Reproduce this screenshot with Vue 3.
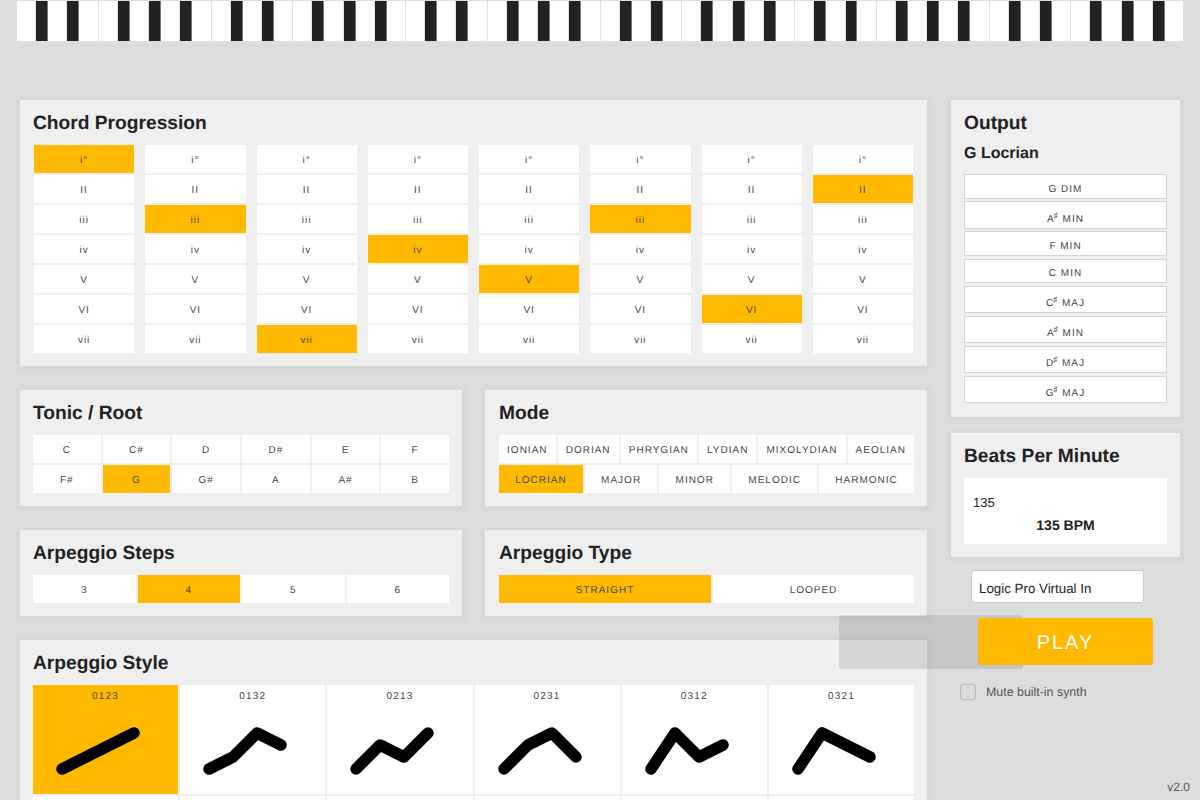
<script setup>
const octave = ['w','b','w','b','w','w','b','w','b','w','b','w']
const keys = Array.from({ length: 72 }, (_, i) => octave[i % 12])
const chordRows = ['i°','II','iii','iv','V','VI','vii']
const progression = [0,2,6,3,4,2,5,1]
const tonics = ['C','C#','D','D#','E','F','F#','G','G#','A','A#','B']
const modes = ['Ionian','Dorian','Phrygian','Lydian','Mixolydian','Aeolian','Locrian','Major','Minor','Melodic','Harmonic']
const output = [
  { n: 'G', q: 'DIM' }, { n: 'A', s: true, q: 'MIN' }, { n: 'F', q: 'MIN' }, { n: 'C', q: 'MIN' },
  { n: 'C', s: true, q: 'MAJ' }, { n: 'A', s: true, q: 'MIN' }, { n: 'D', s: true, q: 'MAJ' }, { n: 'G', s: true, q: 'MAJ' }
]
const styles = ['0123','0132','0213','0231','0312','0321']
const points = s => s.split('').map((c, i) => `${29 + 24 * i},${66 - 12 * Number(c)}`).join(' ')
</script>

<template>
  <div class="page">
    <div class="keyboard">
      <div v-for="(k, i) in keys" :key="i" :class="k === 'w' ? 'white' : 'black'"></div>
    </div>

    <div class="layout">
      <div class="left">
        <section class="panel">
          <h2>Chord Progression</h2>
          <div class="chords">
            <div v-for="(sel, c) in progression" :key="c" class="chord-col">
              <div v-for="(r, i) in chordRows" :key="r" class="cell" :class="{ on: sel === i }">{{ r }}</div>
            </div>
          </div>
        </section>

        <div class="pair">
          <section class="panel">
            <h2>Tonic / Root</h2>
            <div class="tonics">
              <div v-for="t in tonics" :key="t" class="cell" :class="{ on: t === 'G' }">{{ t }}</div>
            </div>
          </section>
          <section class="panel">
            <h2>Mode</h2>
            <div class="wrap">
              <div v-for="m in modes" :key="m" class="cell grow upper" :class="{ on: m === 'Locrian' }">{{ m }}</div>
            </div>
          </section>
        </div>

        <div class="pair">
          <section class="panel">
            <h2>Arpeggio Steps</h2>
            <div class="steps">
              <div v-for="s in [3,4,5,6]" :key="s" class="cell" :class="{ on: s === 4 }">{{ s }}</div>
            </div>
          </section>
          <section class="panel">
            <h2>Arpeggio Type</h2>
            <div class="wrap">
              <div class="cell grow upper on">Straight</div>
              <div class="cell grow upper">Looped</div>
            </div>
          </section>
        </div>

        <section class="panel">
          <h2>Arpeggio Style</h2>
          <div class="styles">
            <div v-for="s in styles" :key="s" class="style" :class="{ on: s === '0123' }">
              <span class="style-label">{{ s }}</span>
              <svg class="shape">
                <polyline :points="points(s)" />
              </svg>
            </div>
            <div v-for="n in 6" :key="n" class="style"></div>
          </div>
        </section>
      </div>

      <div class="right">
        <section class="panel">
          <h2>Output</h2>
          <h3>G Locrian</h3>
          <div class="outputs">
            <div v-for="(o, i) in output" :key="i" class="out" :class="{ sharp: o.s }">
              {{ o.n }}<sup v-if="o.s">♯</sup>&nbsp;{{ o.q }}
            </div>
          </div>
        </section>

        <section class="panel bpm-panel">
          <h2>Beats Per Minute</h2>
          <div class="bpm">
            <div class="bpm-value">135</div>
            <div class="bpm-label">135 BPM</div>
          </div>
        </section>

        <div class="select">Logic Pro Virtual In</div>

        <div class="play-wrap">
          <div class="overlay"></div>
          <div class="play">PLAY</div>
        </div>

        <label class="mute">
          <span class="box"></span>
          <span class="mute-text">Mute built-in synth</span>
        </label>
      </div>
    </div>

    <div class="version">v2.0</div>
  </div>
</template>

<style scoped>
.page {
  position: relative;
  height: 800px;
  overflow: hidden;
  background: #dddddd;
  font-family: "Liberation Sans", Arial, sans-serif;
  text-rendering: geometricPrecision;
  color: #222;
}
.keyboard {
  display: flex;
  height: 40px;
  margin: 1px 17px 0;
}
.white {
  flex: 5 1 0;
  background: #fff;
  border-right: 1.5px solid #e2e2e2;
}
.white:last-child { border-right: 0; }
.black {
  flex: 3 1 0;
  background: #222;
  border-right: 1px solid #777;
}
.layout {
  display: flex;
  gap: 24px;
  padding: 59px 20px 0;
  align-items: flex-start;
}
.left {
  flex: 0 0 907px;
  min-width: 0;
  display: flex;
  flex-direction: column;
  gap: 24px;
}
.right {
  flex: 1 1 0;
  min-width: 0;
  display: flex;
  flex-direction: column;
}
.pair {
  display: grid;
  grid-template-columns: 442px 442px;
  gap: 23px;
}
.pair .panel:last-child { padding-left: 14px; }
.panel {
  background: #efefef;
  padding: 12px 13px 13px;
  box-shadow: 0 1px 3px 4px rgba(0, 0, 0, 0.025);
}
h2 {
  margin: 0 0 10px;
  font-size: 19.2px;
  line-height: 23px;
  font-weight: 700;
  color: #222;
}
h3 {
  margin: -1px 0 10.3px;
  font-size: 16px;
  line-height: 20px;
  font-weight: 700;
  color: #222;
}
.cell {
  height: 28px;
  box-sizing: border-box;
  padding-top: 2px;
  display: flex;
  align-items: center;
  justify-content: center;
  background: #fff;
  font-size: 10px;
  letter-spacing: 1px;
  color: #444;
  white-space: nowrap;
}
.cell.on, .style.on { background: #ffba00; }
.upper { text-transform: uppercase; }
.chords {
  display: grid;
  grid-template-columns: repeat(8, minmax(0, 1fr));
  column-gap: 11px;
  padding: 0 1px;
}
.chord-col {
  display: flex;
  flex-direction: column;
  gap: 2px;
}
.tonics {
  display: grid;
  grid-template-columns: repeat(6, minmax(0, 1fr));
  gap: 2px;
}
.wrap {
  display: flex;
  flex-wrap: wrap;
  gap: 2px;
}
.grow {
  flex: 1 1 auto;
  padding: 2px 8px 0;
}
.steps {
  display: grid;
  grid-template-columns: repeat(4, minmax(0, 1fr));
  gap: 2px;
}
.styles {
  display: grid;
  grid-template-columns: repeat(6, minmax(0, 1fr));
  gap: 2px;
}
.style {
  background: #fff;
  height: 109px;
  padding-top: 6px;
  box-sizing: border-box;
  display: flex;
  flex-direction: column;
  align-items: center;
}
.style-label {
  font-size: 10px;
  line-height: 12px;
  letter-spacing: 1.2px;
  color: #444;
}
.shape {
  display: block;
  width: 100%;
  height: 91px;
}
.shape polyline {
  fill: none;
  stroke: #000;
  stroke-width: 11.5;
  stroke-linecap: round;
  stroke-linejoin: round;
}
.outputs {
  display: flex;
  flex-direction: column;
  gap: 2.7px;
  margin-bottom: 0.7px;
}
.out {
  background: #fff;
  border: 1px solid #d4d4d4;
  padding: 8.3px 0 2.2px;
  font-size: 10px;
  line-height: 12px;
  letter-spacing: 1px;
  color: #444;
  text-align: center;
}
.out.sharp { padding-top: 11.1px; }
.out sup {
  font-size: 8px;
  line-height: 0;
  letter-spacing: 0;
  vertical-align: 4px;
  margin-left: -1px;
  margin-right: 1px;
}
.bpm-panel { margin-top: 16px; }
.bpm {
  background: #fff;
  height: 66px;
  box-sizing: border-box;
  padding: 17px 9px 0;
  font-size: 13px;
  line-height: 15px;
  color: #222;
}
.bpm-label {
  margin-top: 8px;
  text-align: center;
  font-size: 14px;
  font-weight: 700;
}
.select {
  box-sizing: border-box;
  width: 173px;
  height: 33px;
  margin: 13px 0 0 20px;
  padding: 5px 7px 0;
  display: flex;
  align-items: center;
  background: #fff;
  border: 1px solid #c8c8c8;
  border-radius: 3px;
  font-size: 13.33px;
  color: #222;
}
.play-wrap {
  position: relative;
  width: 175px;
  height: 47px;
  margin: 15px 0 0 27px;
}
.overlay {
  position: absolute;
  left: -139px;
  top: -3px;
  width: 184px;
  height: 54px;
  border-radius: 3px;
  background: rgba(0, 0, 0, 0.1);
}
.play {
  position: relative;
  height: 47px;
  box-sizing: border-box;
  padding-top: 5px;
  display: flex;
  align-items: center;
  justify-content: center;
  background: #ffba00;
  border-radius: 3px;
  color: #fff;
  font-size: 20px;
  letter-spacing: 2px;
}
.mute {
  display: flex;
  align-items: center;
  gap: 10px;
  margin: 19px 0 0 9px;
  font-size: 12.4px;
  color: #555;
}
.mute-text { padding-top: 1.5px; }
.box {
  box-sizing: border-box;
  width: 16px;
  height: 16px;
  border: 1px solid #bbb;
  border-radius: 3px;
}
.version {
  position: absolute;
  right: 10px;
  bottom: 6px;
  font-size: 12px;
  color: #555;
}
</style>
